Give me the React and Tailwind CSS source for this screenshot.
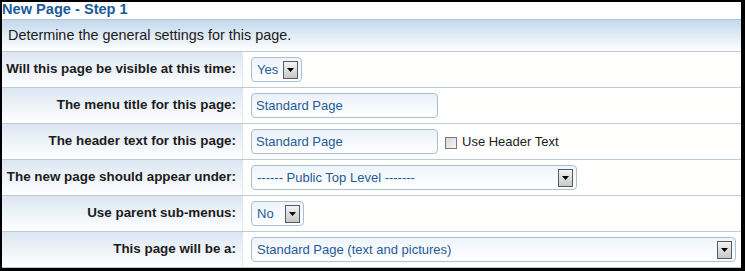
import { useState } from "react";

const Arrow = () => (
  <span className="flex items-center justify-center w-[15px] h-[18px] border border-[#5a5a5a] bg-gradient-to-b from-[#f4f4f4] to-[#c8c8c8]">
    <svg width="7" height="4" viewBox="0 0 7 4">
      <path d="M0 0h7L3.5 4z" fill="#000" />
    </svg>
  </span>
);

const Select = ({ value, width }) => (
  <div
    className={`flex items-center justify-between h-[25px] pl-[5px] pr-[3px] rounded-[4px] border border-[#a9bfd6] bg-gradient-to-b from-[#eef4fb] to-white text-[#1f5c99] ${width}`}
  >
    <span className="truncate">{value}</span>
    <Arrow />
  </div>
);

const TextBox = ({ value }) => (
  <div className="flex items-center w-[187px] h-[25px] px-[4px] rounded-[4px] border border-[#a9bfd6] bg-gradient-to-b from-[#eaf1f9] to-white text-[#1f5c99]">
    {value}
  </div>
);

const Row = ({ label, children }) => (
  <div className="grid grid-cols-[241px_1fr] h-[36px] border-b border-[#bccbda]">
    <div className="flex items-center justify-end pr-[6px] text-[13.4px] font-bold text-[#1c1c1c] bg-gradient-to-b from-[#dbe6f2] to-white border-r border-[#e3eaf2] whitespace-nowrap">
      {label}
    </div>
    <div className="flex items-center gap-[7px] pl-[8px] bg-[#fffffd]">{children}</div>
  </div>
);

export default function App() {
  const [useHeader, setUseHeader] = useState(false);

  return (
    <div className="w-[745px] h-[271px] bg-black pl-[2px] pr-[4px] pt-[2px] pb-[3px] font-['Liberation_Sans',Arial,sans-serif] text-[13px]">
      <div className="h-full bg-white flex flex-col">
        <div className="h-[17px] leading-[15px] text-[14.6px] font-bold text-[#1a5a9c] whitespace-nowrap">
          New Page - Step 1
        </div>
        <div className="h-[33px] flex items-center pl-[6px] text-[14.4px] text-[#1a1a1a] bg-gradient-to-b from-[#c3d8ed] to-white border-t border-[#b3c6da] border-b border-b-[#bccbda]">
          Determine the general settings for this page.
        </div>
        <Row label="Will this page be visible at this time:">
          <Select value="Yes" width="w-[51px]" />
        </Row>
        <Row label="The menu title for this page:">
          <TextBox value="Standard Page" />
        </Row>
        <Row label="The header text for this page:">
          <TextBox value="Standard Page" />
          <label className="flex items-center gap-[5px] text-[#1a1a1a]">
            <input
              type="checkbox"
              checked={useHeader}
              onChange={(e) => setUseHeader(e.target.checked)}
              className="appearance-none w-[12px] h-[12px] mt-[3px] border border-[#7a7a7a] bg-gradient-to-br from-[#d6d6d6] to-[#f7f7f7]"
            />
            Use Header Text
          </label>
        </Row>
        <Row label="The new page should appear under:">
          <Select value="------ Public Top Level -------" width="w-[326px]" />
        </Row>
        <Row label="Use parent sub-menus:">
          <Select value="No" width="w-[53px]" />
        </Row>
        <Row label="This page will be a:">
          <Select value="Standard Page (text and pictures)" width="w-[485px]" />
        </Row>
      </div>
    </div>
  );
}
